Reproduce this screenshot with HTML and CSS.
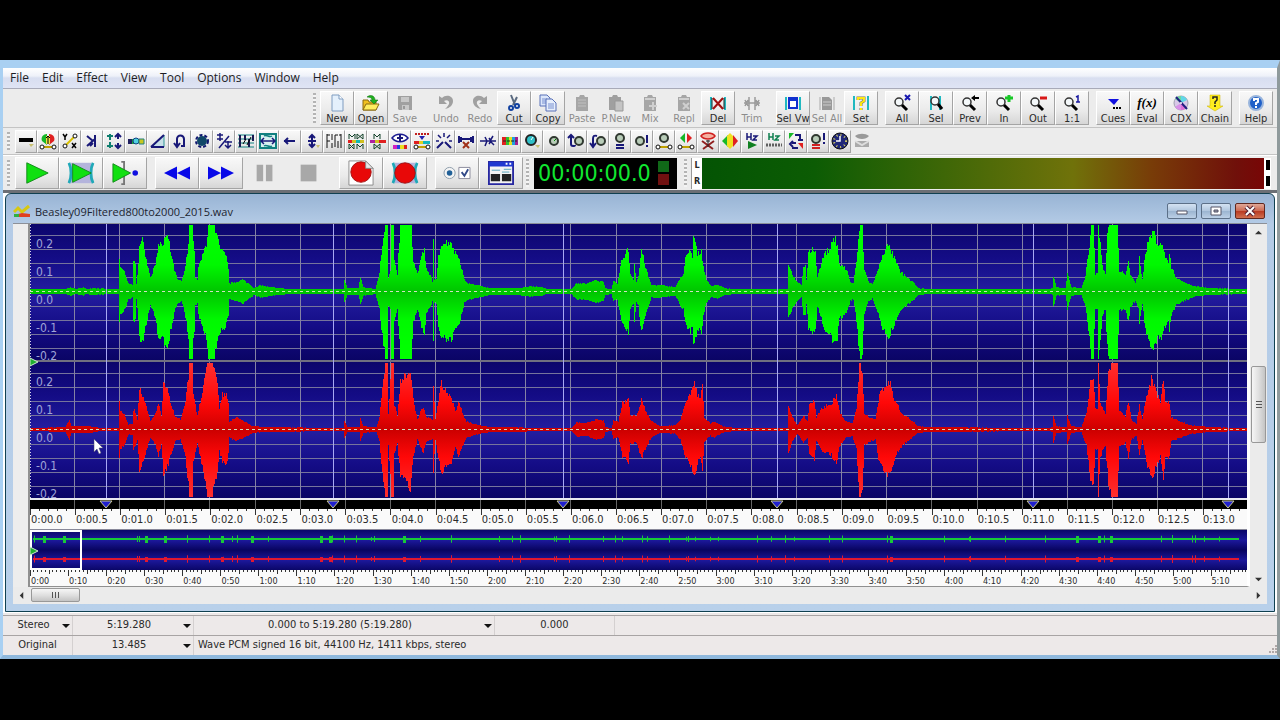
FILE: index.html
```html
<!DOCTYPE html>
<html lang="en">
<head>
    <meta charset="UTF-8">
    <meta name="viewport" content="width=device-width, initial-scale=1.0">
    <title>Beasley09Filtered800to2000_2015.wav</title>
    <link rel="stylesheet" href="styles.css">
</head>
<body>

<div class="app">
    <nav class="menu">
        <a href="#">File</a>
        <a href="#">Edit</a>
        <a href="#">Effect</a>
        <a href="#">View</a>
        <a href="#">Tool</a>
        <a href="#">Options</a>
        <a href="#">Window</a>
        <a href="#">Help</a>
    </nav>

    <!-- main toolbar -->
    <div class="toolbar main-bar">
        <span class="grip"></span>
        <div class="group">
            <button class="tool"><svg viewBox="0 0 18 18"><path d="M4 1h7l4 4v12H4z" fill="#e4f0fc" stroke="#7e9cc0"/><path d="M11 1v4h4" fill="#fff" stroke="#7e9cc0"/></svg>New</button>
            <button class="tool"><svg viewBox="0 0 18 18"><path d="M1 16V6h5l1 2h7v8z" fill="#f0c020" stroke="#8a6a10"/><path d="M1 16l3-6h13l-3 6z" fill="#ffee60" stroke="#8a6a10"/><path d="M5 3c4-3 8-1 8 3h3l-4 4-4-4h2c0-2-2-3-5-3z" fill="#20b020" stroke="#0a6a0a" stroke-width=".5"/></svg>Open</button>
            <button class="tool" disabled><svg viewBox="0 0 18 18"><path d="M2 2h14v14H3l-1-1z" fill="#a0a0a0"/><path d="M5 3h8v5H5zM6 11h7v5H6z" fill="#c8c8c8"/><path d="M7 12h2v3H7z" fill="#999"/></svg>Save</button>
        </div>
        <div class="group">
            <button class="tool" disabled><svg viewBox="0 0 18 18"><path d="M2 2v8h8L7 7c3-2 6 0 5 3-1 2-2 3-4 5 5-1 8-4 8-8 0-5-7-7-11-3z" fill="#a0a0a0"/></svg>Undo</button>
            <button class="tool" disabled><svg viewBox="0 0 18 18"><path d="M16 2v8H8l3-3C8 5 5 7 6 10c1 2 2 3 4 5-5-1-8-4-8-8 0-5 7-7 11-3z" fill="#a0a0a0"/></svg>Redo</button>
            <button class="tool"><svg viewBox="0 0 18 18"><path d="M6 1l4 10M12 3l-4 8" stroke="#5a6a80" stroke-width="2" fill="none"/><circle cx="6" cy="14" r="2" fill="none" stroke="#1040a0" stroke-width="2"/><circle cx="12" cy="12" r="2" fill="none" stroke="#1040a0" stroke-width="2"/></svg>Cut</button>
            <button class="tool"><svg viewBox="0 0 18 18"><path d="M1 1h7l3 3v8H1z" fill="#dbe6fa" stroke="#5870b8"/><path d="M3 5h5M3 7h5M3 9h4" stroke="#7890d0"/><path d="M7 5h6l4 4v8H7z" fill="#e6eefc" stroke="#5870b8"/><path d="M9 10h6M9 12h6M9 14h6" stroke="#7890d0"/></svg>Copy</button>
            <button class="tool" disabled><svg viewBox="0 0 18 18"><path d="M3 3h3l1-2h4l1 2h3v14H3z" fill="#a6a6a6"/><path d="M5 6h8M5 9h8M5 12h8" stroke="#c0c0c0"/></svg>Paste</button>
            <button class="tool" disabled><svg viewBox="0 0 18 18"><path d="M2 3h3l1-2h4l1 2h3v13H2z" fill="#a0a0a0"/><path d="M8 7h8v10H8z" fill="#c4c4c4" stroke="#999"/></svg>P.New</button>
            <button class="tool" disabled><svg viewBox="0 0 18 18"><path d="M3 3h3l1-2h4l1 2h3v14H3z" fill="#a6a6a6"/><path d="M12 8v8M8 12h8M4 5h10" stroke="#d0d0d0" stroke-width="2"/></svg>Mix</button>
            <button class="tool" disabled><svg viewBox="0 0 18 18"><path d="M3 3h3l1-2h4l1 2h3v14H3z" fill="#a6a6a6"/><path d="M8 9l6 6M14 9l-6 6M4 5h10" stroke="#d0d0d0" stroke-width="2"/></svg>Repl</button>
            <button class="tool"><svg viewBox="0 0 18 18"><path d="M2 3v13M16 3v13" stroke="#20b8c0" stroke-width="2"/><path d="M3 4v11M15 4v11" stroke="#222"/><path d="M4 4l10 11M14 4L4 15" stroke="#a01010" stroke-width="2"/></svg>Del</button>
            <button class="tool" disabled><svg viewBox="0 0 18 18"><path d="M1 9h16M6 3v13M12 3v13M2 6l3 6M5 6l-3 6M13 6l3 6M16 6l-3 6" stroke="#9a9a9a" stroke-width="1.500" fill="none"/></svg>Trim</button>
        </div>
        <div class="group">
            <button class="tool"><svg viewBox="0 0 18 18"><path d="M2 3v13M16 3v13" stroke="#20b8c0" stroke-width="2"/><path d="M4 3h10v12H4z" fill="#1030d0"/><path d="M6 7h6v6H6z" fill="#fff"/></svg>Sel Vw</button>
            <button class="tool" disabled><svg viewBox="0 0 18 18"><path d="M2 3v13M16 3v13" stroke="#aaa"/><path d="M4 3h7l3 3v10H4z" fill="#999"/><path d="M5 8h8M5 11h8" stroke="#ccc"/></svg>Sel All</button>
            <button class="tool"><svg viewBox="0 0 18 18"><path d="M2 2v14M16 2v14" stroke="#20b8c0" stroke-width="2"/><path d="M6 6V4h6v3L9 9v3M9 14v2" stroke="#776" stroke-width="3" fill="none"/><path d="M6 6V4h6v3L9 9v3M9 14v2" stroke="#ffe810" stroke-width="2" fill="none"/></svg>Set</button>
        </div>
        <div class="group">
            <button class="tool"><svg viewBox="0 0 18 18"><circle cx="6" cy="8" r="4" class="lens"/><path d="M9 11l5 5" class="handle"/><path d="M12 1l5 5M17 1l-5 5" stroke="#1818b0" stroke-width="2"/></svg>All</button>
            <button class="tool"><svg viewBox="0 0 18 18"><path d="M4 2v14M13 2v14" stroke="#20b8c0" stroke-width="2"/><circle cx="8" cy="7" r="4" class="lens"/><path d="M11 10l4 5" class="handle"/></svg>Sel</button>
            <button class="tool"><svg viewBox="0 0 18 18"><circle cx="6" cy="8" r="4" class="lens"/><path d="M9 11l5 5" class="handle"/><path d="M10 4l4-3v2h4v2h-4v2z" fill="#000"/></svg>Prev</button>
            <button class="tool"><svg viewBox="0 0 18 18"><circle cx="6" cy="8" r="4" class="lens"/><path d="M9 11l5 5" class="handle"/><path d="M14 1v7M10 4h8" stroke="#18c828" stroke-width="3"/></svg>In</button>
            <button class="tool"><svg viewBox="0 0 18 18"><circle cx="6" cy="8" r="4" class="lens"/><path d="M9 11l5 5" class="handle"/><path d="M11 4h7" stroke="#d81818" stroke-width="3"/></svg>Out</button>
            <button class="tool"><svg viewBox="0 0 18 18"><circle cx="6" cy="8" r="4" class="lens"/><path d="M9 11l5 5" class="handle"/><path d="M13 3l2-1v6M13 8h4" stroke="#1818a0" stroke-width="1.500" fill="none"/></svg>1:1</button>
        </div>
        <div class="group">
            <button class="tool"><svg viewBox="0 0 18 18"><path d="M4 5h11l-5 6z" fill="#1010e0"/><path d="M9 13h2v2H9zM12 13h2v2h-2zM15 13h2v2h-2z" fill="#000"/></svg>Cues</button>
            <button class="tool"><span class="fx">f(x)</span>Eval</button>
            <button class="tool"><svg viewBox="0 0 18 18"><circle cx="9" cy="9" r="7" fill="#d8c8e8" stroke="#a0a0b0"/><path d="M9 9L3 5a7 7 0 0 1 6-3z" fill="#70d8a0"/><path d="M9 9V2a7 7 0 0 1 6 4z" fill="#60d8e8"/><path d="M9 9l6 4a7 7 0 0 1-6 3z" fill="#e070d8"/><path d="M9 9l-6 4a7 7 0 0 0 6 3z" fill="#d890e8"/><path d="M4 3l11 12" stroke="#202080" stroke-width="2"/><circle cx="9" cy="9" r="1" fill="#fff"/></svg>CDX</button>
            <button class="tool"><svg viewBox="0 0 18 18"><path d="M4 1h10v11h3l-8 5-8-5h3z" fill="#ffee20" stroke="#c8b000" stroke-width=".5"/><path d="M7 5V3h4v3L9 8v2M9 11v2" stroke="#222" stroke-width="1.500" fill="none"/></svg>Chain</button>
        </div>
        <div class="group">
            <button class="tool"><svg viewBox="0 0 18 18"><circle cx="9" cy="9" r="7" fill="#2060c8" stroke="#98b4dc" stroke-width="2"/><path d="M7 7V5h4v3L9 9v2M9 12v2" stroke="#fff" stroke-width="2" fill="none"/></svg>Help</button>
        </div>
    </div>

    <!-- effects toolbar -->
    <div class="toolbar fx-bar">
        <span class="grip"></span>
        <button class="fxb" aria-label="Silence"><svg viewBox="0 0 18 18"><path d="M2 6h14v4H2z" fill="#000"/><path d="M12 12h5l-3 3z" fill="#c8c070"/></svg></button>
        <button class="fxb" aria-label="Mechanize"><svg viewBox="0 0 18 18"><path d="M8 2a5 5 0 0 0-5 7l5 4z" fill="#18b828"/><path d="M10 2a5 5 0 0 1 5 7l-5 4z" fill="#e02020"/><path d="M7 4h4v8H7z" fill="#f0e040"/><path d="M9 4v8M7 6l2-2 2 2" stroke="#000" fill="none"/><path d="M4 15h10" stroke="#c0a000" stroke-width="2"/><circle cx="3" cy="15" r="2" class="node"/><circle cx="15" cy="15" r="2" class="node"/></svg></button>
        <button class="fxb" aria-label="Expression"><svg viewBox="0 0 18 18"><path d="M2 2l2 3 2-3M4 5v3M11 11l4 5M15 11l-4 5" stroke="#000" stroke-width="1.500" fill="none"/><path d="M4 14L14 4" stroke="#d8c000" stroke-width="2"/><circle cx="4" cy="14" r="2" class="node"/><circle cx="14" cy="4" r="2" class="node"/></svg></button>
        <button class="fxb" aria-label="Doppler"><svg viewBox="0 0 18 18"><path d="M4 4l6 5M4 14l8-7v-3M12 3v12M7 14l3-3" class="nv"/></svg></button>
        <button class="fxb" aria-label="Dynamics"><svg viewBox="0 0 18 18"><path d="M5 2v6M2 4h6M5 10v6M2 14h6" stroke="#108070" stroke-width="2"/><path d="M13 2v5M10 5l3-3 3 3M13 11v5M10 13l3 3 3-3" class="nv"/></svg></button>
        <button class="fxb" aria-label="Echo"><svg viewBox="0 0 18 18"><path d="M1 7h4v5H1z" fill="#202060"/><path d="M5 7h3v5H5z" fill="#18a838"/><circle cx="9" cy="9" r="3" fill="#50d0e0" stroke="#104080"/><path d="M12 7h5v5h-5z" fill="#c8c820" stroke="#208080"/></svg></button>
        <button class="fxb" aria-label="Fade"><svg viewBox="0 0 18 18"><path d="M3 15L15 3v12z" fill="#c8e0e8" stroke="#309898"/><path d="M2 15L15 3M2 15h13" class="nv"/></svg></button>
        <button class="fxb" aria-label="Reverse"><svg viewBox="0 0 18 18"><path d="M6 14V7a3 3 0 0 1 7 0v7h-3M3 11l3 4 3-4" class="nv"/></svg></button>
        <button class="fxb" aria-label="Filter"><svg viewBox="0 0 18 18"><circle cx="9" cy="9" r="5" fill="#104868"/><circle cx="9" cy="9" r="6" fill="none" stroke="#101870" stroke-width="2" stroke-dasharray="3 2"/></svg></button>
        <button class="fxb" aria-label="Flanger"><svg viewBox="0 0 18 18"><path d="M5 1v8M2 3h6M2 7h6M4 16L14 4M13 9v7M10 10h7M10 13l3 3 3-3" class="nv thin"/></svg></button>
        <button class="fxb" aria-label="Equalizer"><svg viewBox="0 0 18 18"><path d="M1 3h16M1 7h16M1 11h16M1 15h16" stroke="#108080"/><path d="M3 3v12M8 3v5M12 7v8M16 3v6" stroke="#181850" stroke-width="2"/><path d="M6 12l3-5M10 13l4-8" stroke="#000"/></svg></button>
        <button class="fxb" aria-label="Pitch"><svg viewBox="0 0 18 18"><path d="M1 2h16v14H1z" fill="#d8f0f0" stroke="#108080" stroke-width="2"/><path d="M3 9h12M5 6L2 9l3 3M13 6l3 3-3 3" class="nv thin"/><path d="M5 4c3-2 5 2 8 0M5 14c3-2 5 2 8 0" stroke="#108080" stroke-width="1.500" fill="none"/></svg></button>
        <button class="fxb" aria-label="Offset"><svg viewBox="0 0 18 18"><path d="M3 9h11M7 6L4 9l3 3" class="nv"/></svg></button>
        <button class="fxb" aria-label="Interpolate"><svg viewBox="0 0 18 18"><path d="M9 3v12M6 6l3-3 3 3M6 12l3 3 3-3M5 9h8" class="nv"/><path d="M13 13h4l-2 3z" fill="#c8c070"/></svg></button>
        <button class="fxb" aria-label="Resample"><svg viewBox="0 0 18 18"><path d="M2 2v14M2 3h3M2 9h3M7 2v6M7 11v5M10 3v12M10 3h3M13 9v7M16 2v14M14 3h2" stroke="#111" fill="none"/></svg></button>
        <button class="fxb" aria-label="Spectrum filter"><svg viewBox="0 0 18 18"><path d="M1 8h16v3H1z" fill="#d0c020"/><path d="M1 8h4v3H1z" fill="#e02020"/><path d="M9 8h4v3H9z" fill="#10b8b0"/><path d="M2 7V2l3 3 3-3v5M10 2v5l6-5v5l-6-5M2 12v5l5-5v5l-5-5M10 17v-5l3 3 3-3v5" stroke="#114028" fill="none"/></svg></button>
        <button class="fxb" aria-label="Parametric"><svg viewBox="0 0 18 18"><path d="M1 8h16v3H1z" fill="#d0c020"/><path d="M1 8h5v3H1z" fill="#b020a0"/><path d="M10 8h7v3h-7z" fill="#e02020"/><path d="M5 7V2l3 3 3-3v5M5 12v5l6-5v5l-6-5" stroke="#114028" fill="none"/></svg></button>
        <button class="fxb" aria-label="Spectrum view"><svg viewBox="0 0 18 18"><path d="M1 6c4-5 12-5 16 0-4 5-12 5-16 0z" fill="#fff" stroke="#181890" stroke-width="1.500"/><path d="M9 3v6M6 6h6" class="nv"/><path d="M2 13h4v4H2z" fill="#d020c0"/><path d="M6 13h3v4H6z" fill="#2040e0"/><path d="M9 13h4v4H9z" fill="#e8e020"/><path d="M13 13h3v4h-3z" fill="#e02020"/></svg></button>
        <button class="fxb" aria-label="Noise shape"><svg viewBox="0 0 18 18"><path d="M2 2h14" stroke="#c02020" stroke-width="2" stroke-dasharray="2 1"/><path d="M6 4h6L9 8z" fill="#2020b0"/><path d="M1 9h5v3H1z" fill="#e02020"/><path d="M6 9h4v3H6z" fill="#e0d020"/><path d="M10 9h7v3h-7z" fill="#10b8c0"/><path d="M4 15h10" stroke="#c0a000" stroke-width="2"/><circle cx="3" cy="15" r="2" class="node"/><circle cx="15" cy="15" r="2" class="node"/></svg></button>
        <button class="fxb" aria-label="Pop click"><svg viewBox="0 0 18 18"><path d="M2 16l6-6M16 16l-6-6" class="nv"/><path d="M9 1v4M3 3l3 3M15 3l-3 3M1 9h3M14 9h3" class="nv thin"/></svg></button>
        <button class="fxb" aria-label="Noise gate"><svg viewBox="0 0 18 18"><path d="M2 4v7M4 5v5M14 5v5M16 4v7M2 7h14" class="nv"/><path d="M6 10l6 6M12 10l-6 6" stroke="#a03018" stroke-width="2"/></svg></button>
        <button class="fxb" aria-label="Smoother"><svg viewBox="0 0 18 18"><path d="M1 9h16M6 5l2 4-2 5M10 6l2 3-2 3M14 4l-3 5 4 4" class="nv thin"/></svg></button>
        <button class="fxb" aria-label="Stereo mix"><svg viewBox="0 0 18 18"><path d="M1 5h4v8H1z" fill="#e02020"/><path d="M5 5h3v8H5z" fill="#30c030"/><path d="M8 5h3v8H8z" fill="#e8e020"/><path d="M11 5h3v8h-3z" fill="#20a0e0"/><path d="M14 5h3v8h-3z" fill="#a02090"/><path d="M2 9h14" stroke="#222" stroke-dasharray="3 1"/></svg></button>
        <button class="fxb" aria-label="Volume"><svg viewBox="0 0 18 18"><circle cx="8" cy="8" r="5" fill="#30c0c8" stroke="#222" stroke-width="2"/><path d="M8 8l2-3" stroke="#fff"/><path d="M12 13h5l-2 3z" fill="#c8c070"/></svg></button>
        <button class="fxb" aria-label="Knob"><svg viewBox="0 0 18 18"><circle cx="9" cy="9" r="4" class="knob"/><path d="M9 9l2-2" stroke="#080"/></svg></button>
        <button class="fxb" aria-label="Fade in"><svg viewBox="0 0 18 18"><path d="M4 4v8c0 3 4 2 4 1M1 6l3-3 3 3" class="nv"/><circle cx="12" cy="9" r="4" class="knob"/></svg></button>
        <button class="fxb" aria-label="Fade out"><svg viewBox="0 0 18 18"><path d="M8 4c-3-1-4 0-4 3v7M1 11l3 4 3-4" class="nv"/><circle cx="12" cy="9" r="4" class="knob"/></svg></button>
        <button class="fxb" aria-label="Match"><svg viewBox="0 0 18 18"><circle cx="9" cy="6" r="4" class="knob"/><path d="M5 13h8M5 16h8" class="nv"/></svg></button>
        <button class="fxb" aria-label="Maximize"><svg viewBox="0 0 18 18"><circle cx="7" cy="9" r="4" class="knob"/><path d="M14 3v8M14 13v2" class="nv"/></svg></button>
        <button class="fxb" aria-label="Shape"><svg viewBox="0 0 18 18"><circle cx="9" cy="6" r="4" class="knob"/><path d="M3 15h12" stroke="#c0a000" stroke-width="2"/><circle cx="3" cy="15" r="2" class="node"/><circle cx="15" cy="15" r="2" class="node"/></svg></button>
        <button class="fxb" aria-label="Pan"><svg viewBox="0 0 18 18"><path d="M8 1v10L3 6z" fill="#18b828"/><path d="M10 1v10l5-5z" fill="#e02020"/><path d="M3 15h12" stroke="#c0a000" stroke-width="2"/><circle cx="3" cy="15" r="2" class="node"/><circle cx="15" cy="15" r="2" class="node"/></svg></button>
        <button class="fxb" aria-label="Reduce vocals"><svg viewBox="0 0 18 18"><path d="M2 4c3-4 11-4 14 0-3 4-11 4-14 0z" fill="#f4b0a0" stroke="#d02020" stroke-width="1.500"/><path d="M3 9l11 8M15 9L4 17" stroke="#902020" stroke-width="2"/><path d="M9 8v7M7 9h4" stroke="#222"/></svg></button>
        <button class="fxb" aria-label="Balance"><svg viewBox="0 0 18 18"><path d="M7 3v12L1 9z" fill="#18b828"/><path d="M9 1l3 3v10l-3 3-3-3V4z" fill="#f0e020"/><path d="M12 3v12l5-6z" fill="#e02020"/></svg></button>
        <button class="fxb" aria-label="Playback rate"><svg viewBox="0 0 18 18"><path d="M4 1v7M4 5h4M8 1v7M10 4h4l-4 4h4" class="nv thin"/><path d="M5 9l9 4-9 4z" fill="#108020"/></svg></button>
        <button class="fxb" aria-label="Sample rate"><svg viewBox="0 0 18 18"><path d="M4 1v7M4 5h4M8 1v7M10 4h4l-4 4h4" stroke="#108050" fill="none" stroke-width="1.500"/><path d="M1 13h16" stroke="#606060" stroke-width="3" stroke-dasharray="2 1"/></svg></button>
        <button class="fxb" aria-label="Swap"><svg viewBox="0 0 18 18"><path d="M2 1h5L2 7z" fill="#18b828"/><path d="M8 3h5v4M16 8h-5M9 11H5M6 9l-3 3 3 3M5 16h6" class="nv"/><path d="M11 11h5v6z" fill="#e02020"/></svg></button>
        <button class="fxb" aria-label="Auto"><svg viewBox="0 0 18 18"><circle cx="7" cy="7" r="4" class="knob"/><path d="M15 1v7M15 10v2" class="nv"/><path d="M3 13h8M3 16h8" stroke="#d02020" stroke-width="2"/></svg></button>
        <button class="fxb" aria-label="Time"><svg viewBox="0 0 18 18"><circle cx="9" cy="9" r="8" fill="#202878" stroke="#111"/><circle cx="9" cy="9" r="6" fill="none" stroke="#e0d860" stroke-width="2" stroke-dasharray="1 3"/><path d="M9 4v5H5" stroke="#fff" stroke-width="1.500" fill="none"/></svg></button>
        <button class="fxb" aria-label="Speech" disabled><svg viewBox="0 0 18 18"><path d="M2 4c4-3 10-3 14 0-3 4-11 4-14 0z" fill="#999"/><path d="M2 9h14v6H2z" fill="#aaa"/><path d="M2 9l7 4 7-4" stroke="#ddd" stroke-width="2" fill="none"/></svg></button>
    </div>

    <!-- transport, clock and level meter -->
    <div class="toolbar transport">
        <span class="grip"></span>
        <div class="group">
            <button class="big" aria-label="Play"><svg viewBox="0 0 30 28"><path d="M4 3l23 11L4 25z" class="play"/></svg></button>
            <button class="big" aria-label="Play selection"><svg viewBox="0 0 30 28"><path d="M4 3h22v22H4z" fill="#b4b4dc"/><path d="M2 3c3 6 3 16 0 22M28 3c-3 6-3 16 0 22" class="bracket"/><path d="M6 4l20 10L6 24z" class="play"/></svg></button>
            <button class="big" aria-label="Play from cursor"><svg viewBox="0 0 30 28"><path d="M11 2h3v24h-3" fill="none" stroke="#777" stroke-width="2"/><path d="M2 4l19 10L2 24z" class="play"/><circle cx="26" cy="14" r="3" fill="#1010e0"/></svg></button>
        </div>
        <div class="group">
            <button class="big" aria-label="Rewind"><svg viewBox="0 0 30 28"><path d="M15 7v14L1 14zM29 7v14l-14-7z" class="seek"/></svg></button>
            <button class="big" aria-label="Fast forward"><svg viewBox="0 0 30 28"><path d="M1 7v14l14-7zM15 7v14l14-7z" class="seek"/></svg></button>
            <button class="big" aria-label="Pause" disabled><svg viewBox="0 0 30 28"><path d="M6 5h7v18H6zM16 5h7v18h-7z" fill="#a8a8a8"/></svg></button>
            <button class="big" aria-label="Stop" disabled><svg viewBox="0 0 30 28"><path d="M6 5h17v18H6z" fill="#a8a8a8"/></svg></button>
        </div>
        <div class="group">
            <button class="big" aria-label="Record new"><svg viewBox="0 0 30 28"><path d="M2 1h18l8 8v18H2z" fill="#fff" stroke="#888"/><circle cx="15" cy="13" r="11" class="rec"/><path d="M20 1v8h8z" fill="#e8e8e8" stroke="#888"/></svg></button>
            <button class="big" aria-label="Record"><svg viewBox="0 0 30 28"><path d="M4 3h22v22H4z" fill="#b4b4dc"/><path d="M2 3c3 6 3 16 0 22M28 3c-3 6-3 16 0 22" class="bracket"/><circle cx="15" cy="14" r="11" class="rec"/></svg></button>
        </div>
        <div class="group">
            <button class="big" aria-label="Control options"><svg viewBox="0 0 30 28"><circle cx="7" cy="14" r="6" fill="#f4f4f4" stroke="#8898a8"/><circle cx="7" cy="14" r="3" fill="#206098"/><path d="M17 8h12v12H17z" fill="#fff" stroke="#889"/><path d="M20 13l3 4 4-7" fill="none" stroke="#304888" stroke-width="2"/></svg></button>
            <button class="big" aria-label="Visuals"><svg viewBox="0 0 30 28"><path d="M2 2h26v24H2z" fill="#f4f4f4" stroke="#2828a0" stroke-width="2"/><path d="M2 2h26v5H2z" fill="#2038d0"/><path d="M20 4h2M24 4h2" stroke="#fff" stroke-width="2"/><path d="M4 15h10v8H4zM16 15h10v8H16z" fill="#222"/><path d="M5 11h9M18 10h8M16 13h8" stroke="#50a0b8"/></svg></button>
        </div>
        <span class="grip clock-grip"></span>
        <div class="clock">
            <output>00:00:00.0</output>
            <div class="leds"><i class="led-green"></i><i class="led-red"></i></div>
        </div>
        <span class="grip meter-grip"></span>
        <div class="meter">
            <div class="channels"><b>L</b><b>R</b></div>
            <div class="level"></div>
            <div class="peaks"><i></i><i></i></div>
        </div>
    </div>

    <!-- sound window -->
    <div class="desk">
        <section class="sound">
            <header class="titlebar">
                <svg class="logo" viewBox="0 0 18 14"><path d="M1 8l4-4 4 4 7-6" fill="none" stroke="#d8c810" stroke-width="3"/><path d="M1 10h4l4-1 8 1v3H1z" fill="#e04020"/><path d="M1 10h5v3H1z" fill="#30b040"/></svg>
                <h1>Beasley09Filtered800to2000_2015.wav</h1>
                <button class="win" aria-label="Minimize"><svg viewBox="0 0 16 12"><path d="M3 6h10v3H3z" fill="#fff" stroke="#556"/></svg></button>
                <button class="win" aria-label="Restore"><svg viewBox="0 0 16 12"><path d="M3 2h10v8H3z" fill="#fff" stroke="#556"/><path d="M6 5h4v2H6z" fill="#99a" stroke="#556"/></svg></button>
                <button class="win close" aria-label="Close"><svg viewBox="0 0 16 12"><path d="M4 2l8 8M12 2l-8 8" stroke="#523" stroke-width="4"/><path d="M4 2l8 8M12 2l-8 8" stroke="#fff" stroke-width="2"/></svg></button>
            </header>

            <div class="client">
                <div class="view">
                    <div class="wave">
                        <svg id="wave" viewBox="0 0 1217 276" preserveAspectRatio="none">
                            <defs>
                                <linearGradient id="greenFill" gradientUnits="userSpaceOnUse" x1="0" y1="0" x2="0" y2="136">
                                    <stop offset="0.1" stop-color="#00ff00"/>
                                    <stop offset="0.3" stop-color="#00f800"/>
                                    <stop offset="0.5" stop-color="#00c400"/>
                                    <stop offset="0.7" stop-color="#00f800"/>
                                    <stop offset="0.9" stop-color="#00ff00"/>
                                </linearGradient>
                                <linearGradient id="redFill" gradientUnits="userSpaceOnUse" x1="0" y1="138" x2="0" y2="274">
                                    <stop offset="0" stop-color="#ff3030"/>
                                    <stop offset="0.3" stop-color="#ff0808"/>
                                    <stop offset="0.5" stop-color="#cc0000"/>
                                    <stop offset="0.7" stop-color="#ff0808"/>
                                    <stop offset="1" stop-color="#ff3030"/>
                                </linearGradient>
                            </defs>
                        </svg>
                        <ul class="scale left">
                            <li>0.2</li><li>0.1</li><li>0.0</li><li>-0.1</li><li>-0.2</li>
                        </ul>
                        <ul class="scale right">
                            <li>0.2</li><li>0.1</li><li>0.0</li><li>-0.1</li><li>-0.2</li>
                        </ul>
                        <svg class="mark wave-mark" viewBox="0 0 9 10"><path d="M0 1l8 4-8 4z" class="flag"/></svg>
                        <svg class="pointer" viewBox="0 0 10 16"><path d="M1 0v13l3-3 2 5 2-1-2-5h4z" fill="#fff" stroke="#446" stroke-width=".5"/></svg>
                    </div>
                    <svg id="cues" class="cues" viewBox="0 0 1217 9" preserveAspectRatio="none"></svg>
                    <div class="ruler" id="ruler"></div>
                    <div class="overview">
                        <svg id="overview" viewBox="0 0 1217 40" preserveAspectRatio="none"></svg>
                        <div class="range"></div>
                        <svg class="mark over-mark" viewBox="0 0 9 10"><path d="M0 1l8 4-8 4z" class="flag"/></svg>
                    </div>
                    <div class="ruler small" id="fullRuler"></div>
                </div>
                <div class="vscroll">
                    <button class="arrow" aria-label="Scroll up"><svg viewBox="0 0 8 8"><path d="M0 6l4-4 4 4z"/></svg></button>
                    <div class="track"><span class="thumb"></span></div>
                    <button class="arrow" aria-label="Scroll down"><svg viewBox="0 0 8 8"><path d="M0 2l4 4 4-4z"/></svg></button>
                </div>
                <div class="hscroll">
                    <button class="arrow" aria-label="Scroll left"><svg viewBox="0 0 8 8"><path d="M6 0L2 4l4 4z"/></svg></button>
                    <div class="track"><span class="thumb"></span></div>
                    <button class="arrow" aria-label="Scroll right"><svg viewBox="0 0 8 8"><path d="M2 0l4 4-4 4z"/></svg></button>
                </div>
            </div>
        </section>
    </div>

    <footer class="status">
        <div class="line">
            <label class="cell mode"><select aria-label="Channels"><option>Stereo</option></select></label>
            <label class="cell length"><select aria-label="Length"><option>5:19.280</option></select></label>
            <label class="cell selection"><select aria-label="Selection"><option>0.000 to 5:19.280 (5:19.280)</option></select></label>
            <span class="cell position">0.000</span>
        </div>
        <div class="line">
            <span class="cell mode">Original</span>
            <label class="cell length"><select aria-label="View length"><option>13.485</option></select></label>
            <span class="cell format">Wave PCM signed 16 bit, 44100 Hz, 1411 kbps, stereo</span>
            <svg class="resize" viewBox="0 0 10 10"><path d="M8 2h2M5 5h2M8 5h2M2 8h2M5 8h2M8 8h2" stroke="#b0a8a8" stroke-width="2"/></svg>
        </div>
    </footer>
</div>

<script src="script.js"></script>
</body>
</html>
```
FILE: styles.css
```css
* {
    box-sizing: border-box;
}

body {
    margin: 0;
    padding: 60px 0;
    background: #000;
    color: #2a2a2a;
    font-family: "DejaVu Sans Condensed", "DejaVu Sans", sans-serif;
    font-size: 11px;
}

button {
    font: inherit;
    color: inherit;
    padding: 0;
    cursor: pointer;
}

svg {
    display: block;
}

.app {
    background: #ececec;
    border: solid #a9d0f2;
    border-width: 8px 3px 4px 3px;
    border-right-color: #8f9a9c;
    border-bottom-color: #8fb8dc;
}

/* menu */

.menu {
    display: flex;
    gap: 13px;
    height: 21px;
    padding: 0 7px;
    line-height: 20px;
    background: linear-gradient(#ffffff, #eef1f9 40%, #d8def0 50%, #dfe4f4);
    border-bottom: 1px solid #a8aab8;
    font-family: "Open Sans", sans-serif;
    font-size: 12px;
}

.menu a {
    color: #1c1c24;
    text-decoration: none;
}

/* toolbars */

.toolbar {
    display: flex;
    align-items: center;
}

.group {
    display: flex;
}

.grip {
    flex: none;
    width: 3px;
    align-self: stretch;
    margin: 4px 4px;
    background: repeating-linear-gradient(#b4b4b4 0 2px, #f4f4f4 2px 4px);
}

.main-bar {
    justify-content: flex-end;
    height: 38px;
    gap: 7px;
    padding-right: 4px;
}

.main-bar .grip {
    margin: 4px -3px 4px 0;
}

.tool,
.fxb,
.big {
    border: 1px solid;
    border-color: #fff #a4a4a4 #a4a4a4 #fff;
    background: linear-gradient(#f8f8f8, #eaeaea 60%, #d6d6d6);
}

.tool:disabled,
.fxb:disabled,
.big:disabled {
    color: #8c8c8c;
    background: none;
    border-color: transparent;
}

.tool {
    display: flex;
    flex-direction: column;
    align-items: center;
    width: 34px;
    height: 34px;
    padding-top: 2px;
    line-height: 13px;
    white-space: nowrap;
}

.tool svg {
    width: 18px;
    height: 18px;
    flex: none;
}

.fx {
    height: 18px;
    font: italic bold 13px/18px "Liberation Serif", serif;
    color: #000;
}

.lens {
    fill: #f4f8fa;
    stroke: #333;
    stroke-width: 1.5px;
}

.handle {
    stroke: #000;
    stroke-width: 3px;
}

.fx-bar {
    height: 28px;
    border-top: 1px solid #c4c4c4;
    border-bottom: 1px solid #c4c4c4;
}

.fx-bar .grip,
.transport .grip {
    margin-left: 4px;
    margin-right: 5px;
}

.fxb {
    display: flex;
    justify-content: center;
    align-items: center;
    width: 22px;
    height: 23px;
}

.fxb svg {
    width: 18px;
    height: 18px;
    flex: none;
}

.nv {
    fill: none;
    stroke: #181878;
    stroke-width: 2px;
}

.thin {
    stroke-width: 1.5px;
}

.node {
    fill: #fff;
    stroke: #111;
}

.knob {
    fill: #b8ccb8;
    stroke: #303830;
    stroke-width: 2px;
}

.transport {
    height: 35px;
    border-top: 1px solid #fff;
}

.transport .group {
    margin-right: 8px;
}

.big {
    display: flex;
    justify-content: center;
    align-items: center;
    width: 44px;
    height: 32px;
}

.big svg {
    width: 28px;
    height: 26px;
}

.play {
    fill: #10e010;
    stroke: #108818;
}

.seek {
    fill: #0808e8;
}

.rec {
    fill: #e80808;
    stroke: #a01010;
}

.bracket {
    fill: none;
    stroke: #20a8b8;
    stroke-width: 3px;
}

.transport .clock-grip {
    margin: 3px 5px 3px -5px;
}

.clock {
    display: flex;
    align-items: center;
    justify-content: space-between;
    width: 143px;
    height: 31px;
    padding: 0 8px 0 4px;
    background: #000;
    color: #10e830;
    font-size: 23px;
}

.leds i {
    display: block;
    width: 11px;
    height: 11px;
    margin: 2px 0;
}

.led-green {
    background: #106818;
}

.led-red {
    background: #701010;
}

.transport .meter-grip {
    margin: 3px 4px 3px 7px;
}

.meter {
    flex: 1;
    display: flex;
    height: 31px;
    background: #fff;
    margin-right: 6px;
}

.channels {
    display: flex;
    flex-direction: column;
    justify-content: space-around;
    width: 11px;
    text-align: center;
    border-left: 1px solid #999;
    font-size: 9px;
}

.level {
    flex: 1;
    background: linear-gradient(90deg, #045404, #0c5c04 20%, #70720a 66%, #783c08 80%, #70100a 95%, #780606);
}

.peaks {
    display: flex;
    flex-direction: column;
    justify-content: space-around;
    padding: 0 1px 0 2px;
}

.peaks i {
    width: 4px;
    height: 10px;
    background: #000;
}

/* sound window */

.desk {
    padding: 0 2px;
    background: #fff;
    border-top: 3px solid #6b6f75;
    border-bottom: 1px solid #fff;
}

.sound {
    padding: 0 7px 7px;
    border: 1px solid #104050;
    border-radius: 6px 6px 0 0;
    background: linear-gradient(#98b4d4, #b4cbe6 30px, #b8d0ea);
}

.titlebar {
    display: flex;
    align-items: center;
    height: 29px;
    padding: 5px 2px 0 0;
    gap: 4px;
}

.titlebar h1 {
    flex: 1;
    margin: 0;
    font: 11px "Open Sans", sans-serif;
    color: #1c2430;
}

.logo {
    width: 18px;
    height: 14px;
}

.win {
    display: flex;
    justify-content: center;
    align-items: center;
    width: 30px;
    height: 16px;
    border: 1px solid #5c7088;
    border-radius: 2px;
    background: linear-gradient(#d4e2f2, #b0c6de 50%, #9ab4d0 50%, #bcd0e6);
}

.win svg {
    width: 16px;
    height: 12px;
}

.close {
    border-color: #602820;
    background: linear-gradient(#e0a898, #cc6850 50%, #b83820 50%, #d07050);
}

.client {
    display: grid;
    grid-template-columns: 1fr 17px;
    background: #ededed;
    border-top: 1px solid #8c9098;
}

.view {
    min-width: 0;
    margin-left: 15px;
    border: solid #909090;
    border-width: 0 3px 1px 2px;
    border-right-color: #fff;
    background: #fff;
}

.wave {
    position: relative;
    background: #0c0872;
}

.wave > svg:first-child {
    width: 100%;
    height: 276px;
}

.scale {
    position: absolute;
    left: 6px;
    margin: 0;
    padding: 0;
    list-style: none;
    color: #a0a4d8;
    font-size: 12px;
    line-height: 28px;
}

.scale.left {
    top: 6px;
}

.scale.right {
    top: 144px;
    height: 132px;
    overflow: hidden;
}

.mark {
    position: absolute;
    left: 0;
    width: 9px;
    height: 10px;
}

.wave-mark {
    top: 133px;
}

.over-mark {
    top: 16px;
}

.flag {
    fill: #20b030;
    stroke: #d0e8d0;
}

.pointer {
    position: absolute;
    left: 63px;
    top: 215px;
    width: 10px;
    height: 16px;
}

.cues {
    width: 100%;
    height: 9px;
    background: #000;
}

.ruler {
    height: 20px;
    overflow: hidden;
    background: #fafafa;
}

.ruler svg {
    width: 100%;
    height: 6px;
}

.labels {
    display: flex;
    padding-left: 1px;
    line-height: 10px;
    white-space: nowrap;
}

.labels span {
    flex: none;
}

.overview {
    position: relative;
    border-top: 1px solid #889;
}

.overview > svg:first-child {
    width: 100%;
    height: 40px;
    background: linear-gradient(#0a0668, #1c189a 26%, #080460 50%, #1c189a 76%, #0a0668);
}

.range {
    position: absolute;
    left: 0;
    top: 0;
    width: 52px;
    height: 40px;
    border: 2px solid #fff;
}

.ruler.small {
    height: 16px;
    font-size: 9px;
}

.vscroll,
.hscroll {
    display: flex;
    background: #ebebeb;
}

.vscroll {
    flex-direction: column;
}

.hscroll {
    grid-column: 1 / 3;
    height: 17px;
}

.arrow {
    display: flex;
    justify-content: center;
    align-items: center;
    flex: none;
    width: 17px;
    height: 16px;
    border: 0;
    background: none;
}

.arrow svg {
    width: 7px;
    height: 7px;
    fill: #333;
}

.track {
    flex: 1;
}

.thumb {
    display: flex;
    justify-content: center;
    align-items: center;
    border: 1px solid #989898;
    border-radius: 2px;
}

.thumb::after {
    content: "";
}

.vscroll .track {
    padding-top: 126px;
}

.vscroll .thumb {
    width: 15px;
    height: 77px;
    margin: 0 1px;
    background: linear-gradient(90deg, #f6f6f6, #e0e0e0 50%, #c4c4c4);
}

.vscroll .thumb::after {
    background: repeating-linear-gradient(#555 0 1px, transparent 1px 3px);
    width: 6px;
    height: 7px;
}

.hscroll .track {
    padding-left: 1px;
}

.hscroll .thumb {
    width: 49px;
    height: 14px;
    margin: 1px 0;
    background: linear-gradient(#f6f6f6, #e0e0e0 50%, #c4c4c4);
}

.hscroll .thumb::after {
    background: repeating-linear-gradient(90deg, #555 0 1px, transparent 1px 3px);
    width: 8px;
    height: 6px;
}

/* status bar */

.status {
    padding-top: 2px;
    background: #ede9e9;
}

.line {
    display: flex;
    height: 20px;
    border-top: 1px solid #a8a4a4;
    line-height: 18px;
}

.cell {
    position: relative;
    flex: none;
    text-align: center;
    border-right: 1px solid #d4d0d0;
}

.cell select {
    display: block;
    width: 100%;
    height: 18px;
    padding: 0 8px 0 0;
    appearance: none;
    border: 0;
    background: none;
    color: inherit;
    font: inherit;
    text-align: center;
    text-align-last: center;
}

label.cell::after {
    content: "";
    position: absolute;
    right: 2px;
    top: 8px;
    border: 4px solid transparent;
    border-top-color: #111;
    border-bottom: 0;
}

.mode {
    width: 70px;
}

.length {
    width: 121px;
}

.selection {
    width: 301px;
}

.position {
    width: 120px;
}

.format {
    padding-left: 4px;
    border-right: 0;
}

.resize {
    width: 10px;
    height: 10px;
    margin: 8px 0 0 auto;
}
```
FILE: script.js
```js
const NS = "http://www.w3.org/2000/svg";
const WIDTH = 1217;
const SECONDS = 13.485;
const TOTAL = 319.28;

// envelope of each channel: x, height pairs
const left = [
    0,2, 35,2, 40,4, 46,2, 53,4, 56,2, 62,3, 88,2, 89,34, 90,25, 94,20, 98,8, 102,6, 103,30, 105,30, 106,8,
    108,28, 109,50, 111,54, 113,50, 116,32, 120,15, 122,18, 125,30, 128,47, 133,48, 134,55, 138,55, 140,42,
    144,22, 147,12, 151,10, 154,20, 157,40, 159,67, 162,67, 164,40, 165,14, 167,12, 168,25, 172,36, 176,50,
    178,67, 184,67, 187,55, 190,42, 193,40, 196,34, 198,24, 199,8, 208,10, 212,12, 218,8, 224,3, 230,6, 240,4,
    260,2, 313,2, 314,11, 317,3, 328,3, 330,14, 333,4, 345,2, 347,10, 349,18, 351,40, 354,62, 355,67, 357,67,
    358,15, 360,20, 361,67, 363,67, 364,30, 367,17, 368,40, 370,67, 381,67, 383,32, 387,18, 391,36, 394,43,
    396,22, 401,14, 402,10, 403,52, 404,12, 406,12, 408,35, 411,50, 415,50, 421,52, 423,42, 428,37, 431,25,
    434,12, 438,8, 448,6, 460,3, 486,3, 500,5, 512,4, 516,2, 541,2, 546,8, 556,8, 565,11, 573,10, 575,3,
    581,2, 583,10, 587,8, 591,30, 595,40, 598,43, 600,18, 603,12, 604,30, 606,10, 608,15, 611,44, 614,30,
    618,15, 621,6, 630,6, 645,4, 650,14, 653,18, 655,34, 660,42, 662,35, 663,57, 665,50, 667,38, 671,42,
    673,26, 676,12, 681,5, 687,7, 694,3, 710,2, 757,2, 758,28, 761,20, 766,10, 771,6, 773,26, 775,26, 776,12,
    778,38, 782,45, 785,40, 787,16, 791,28, 794,40, 799,42, 804,55, 807,50, 809,28, 814,25, 817,20, 820,9,
    823,8, 826,30, 829,64, 830,67, 832,64, 834,22, 838,10, 842,7, 847,20, 852,38, 858,48, 864,34, 870,20,
    877,14, 884,8, 888,3, 900,2, 1019,2, 1022,3, 1023,16, 1026,4, 1035,3, 1037,18, 1041,4, 1051,3, 1055,15,
    1058,40, 1061,66, 1063,66, 1065,18, 1067,18, 1068,67, 1070,50, 1072,25, 1075,18, 1077,60, 1079,67,
    1087,67, 1089,20, 1095,18, 1098,32, 1100,16, 1105,9, 1108,18, 1109,35, 1112,12, 1115,40, 1119,55,
    1123,62, 1127,50, 1131,50, 1134,38, 1138,30, 1139,42, 1141,24, 1146,14, 1154,9, 1164,5, 1180,3, 1217,2
];

const right = [
    0,1, 35,2, 39,10, 41,3, 60,3, 70,1, 88,1, 89,28, 90,20, 94,16, 98,5, 102,5, 103,20, 105,18, 107,10,
    109,44, 112,36, 116,22, 120,8, 125,16, 128,28, 131,14, 133,46, 136,44, 140,28, 145,12, 150,10, 154,22,
    158,55, 159,67, 162,67, 163,35, 167,14, 172,40, 177,67, 182,67, 187,48, 189,20, 192,36, 196,36, 198,26,
    199,8, 206,12, 214,8, 222,3, 240,2, 313,1, 314,9, 317,2, 329,2, 330,11, 333,3, 346,2, 349,12, 352,45,
    355,67, 357,67, 358,15, 361,67, 363,67, 364,25, 367,14, 370,50, 376,57, 380,62, 383,30, 387,10, 390,18,
    393,23, 396,12, 402,10, 403,44, 405,10, 408,30, 411,48, 415,40, 421,34, 425,18, 428,28, 432,18, 436,8,
    445,5, 460,2, 541,1, 546,7, 556,6, 565,10, 573,9, 575,2, 581,1, 583,9, 588,8, 592,28, 595,28, 598,34,
    600,14, 606,14, 611,30, 615,20, 621,8, 630,3, 645,4, 650,10, 654,26, 660,36, 664,48, 667,36, 670,30,
    672,46, 674,12, 680,6, 684,8, 692,3, 705,1, 757,1, 758,24, 762,12, 767,4, 773,14, 777,8, 779,26, 784,31,
    786,12, 792,22, 796,24, 801,26, 806,36, 809,18, 815,8, 822,6, 826,20, 829,67, 832,60, 834,16, 840,12,
    845,10, 849,36, 855,46, 860,47, 865,28, 872,16, 880,10, 888,3, 900,2, 1019,1, 1022,2, 1023,14, 1026,3,
    1036,2, 1037,14, 1041,3, 1051,2, 1056,16, 1060,50, 1063,56, 1065,20, 1067,20, 1068,67, 1070,28, 1075,16,
    1078,58, 1081,67, 1087,67, 1089,18, 1095,14, 1098,28, 1101,10, 1106,6, 1109,26, 1112,10, 1116,34,
    1121,52, 1126,38, 1130,28, 1133,51, 1135,30, 1139,28, 1141,12, 1150,8, 1160,4, 1180,2, 1217,1
];

const cuePoints = [76, 303, 533, 747, 1003, 1198];

let seed = 7;
function random() {
    seed = (seed * 16807) % 2147483647;
    return seed / 2147483647;
}

function add(parent, name, attrs) {
    const el = document.createElementNS(NS, name);
    for (const key in attrs) el.setAttribute(key, attrs[key]);
    parent.appendChild(el);
    return el;
}

function heightAt(points, x) {
    for (let i = 2; i < points.length; i += 2) {
        if (x <= points[i]) {
            const t = (x - points[i - 2]) / (points[i] - points[i - 2]);
            return points[i - 1] + t * (points[i + 1] - points[i - 1]);
        }
    }
    return 1;
}

function envelope(points, middle) {
    let d = "";
    for (let x = 0; x < WIDTH; x++) {
        const h = heightAt(points, x);
        const up = h > 64 ? 67 : h * (0.88 + random() * 0.16) + 0.5;
        const down = h > 64 ? 67 : h * (0.86 + random() * 0.16) + 0.5;
        d += `M${x} ${(middle - up).toFixed(1)}h1V${(middle + down).toFixed(1)}h-1z`;
    }
    return d;
}

function drawWave() {
    const svg = document.getElementById("wave");
    const defs = svg.querySelector("defs");
    const back = add(defs, "linearGradient", { id: "back", x1: 0, y1: 0, x2: 0, y2: 1 });
    [["0", "#0c066c"], ["0.25", "#140c86"], ["0.5", "#241ea0"], ["0.75", "#140c86"], ["1", "#0a0464"]]
        .forEach(([offset, color]) => add(back, "stop", { offset, "stop-color": color }));

    for (const top of [0, 138]) {
        add(svg, "rect", { x: 0, y: top, width: WIDTH, height: 137, fill: "url(#back)" });
        for (const y of [11, 25, 39, 53, 82, 96, 110, 124]) {
            add(svg, "path", { d: `M0 ${top + y + 0.5}H${WIDTH}`, stroke: "#76749c" });
        }
    }
    for (let s = 0.5; s < SECONDS; s += 0.5) {
        const x = Math.round(s / SECONDS * WIDTH) - 0.5;
        add(svg, "path", { d: `M${x} 0V276`, stroke: "#8482a4" });
    }
    add(svg, "path", { d: envelope(left, 67.5), fill: "url(#greenFill)", "shape-rendering": "crispEdges" });
    add(svg, "path", { d: envelope(right, 205.5), fill: "url(#redFill)", "shape-rendering": "crispEdges" });
    add(svg, "path", { d: "M0 67.5H1217M0 205.5H1217", stroke: "#d0e0c0", "stroke-dasharray": "3 3" });
    add(svg, "path", { d: "M0 137H1217", stroke: "#707080", "stroke-width": 2 });
    add(svg, "path", { d: "M0.5 0V276", stroke: "#d0d0e8", "stroke-dasharray": "1 2" });
    for (const x of cuePoints) {
        add(svg, "path", { d: `M${x + 0.5} 0V276`, stroke: "#a8a8f4" });
    }
    add(svg, "path", { d: "M0 275H1217", stroke: "#e8e8f0", "stroke-width": 2 });

    const cues = document.getElementById("cues");
    for (let s = 0.5; s < SECONDS; s += 0.5) {
        const x = Math.round(s / SECONDS * WIDTH) - 0.5;
        add(cues, "path", { d: `M${x} 0V9`, stroke: "#666" });
    }
    for (const x of cuePoints) {
        add(cues, "path", { d: `M${x - 6} 1h12l-6 7z`, fill: "#2020d0", stroke: "#c8c890" });
    }
}

function drawOverview() {
    const svg = document.getElementById("overview");
    let green = "";
    let red = "";
    for (let x = 3; x < WIDTH - 8; x++) {
        const burst = random() > 0.95 ? 2 + random() * 2 : 1;
        green += `M${x} ${9 - burst}h1v${2 * burst}h-1z`;
        red += `M${x} ${29 - burst}h1v${2 * burst}h-1z`;
    }
    for (const x of [13, 33, 115, 134, 191, 221, 290, 299, 373, 860, 1046, 1068, 1080]) {
        green += `M${x} 6h3v7h-3z`;
        red += `M${x} 27h3v5h-3z`;
    }
    add(svg, "path", { d: green, fill: "#18c838" });
    add(svg, "path", { d: red, fill: "#e01830" });
}

function drawRuler(id, step, total, minor, format) {
    const ruler = document.getElementById(id);
    const svg = add(ruler, "svg", { viewBox: "0 0 1217 6", preserveAspectRatio: "none" });
    const labels = document.createElement("div");
    labels.className = "labels";
    const width = step / total;
    for (let i = 0; i * width < 1; i++) {
        for (let m = 0; m < minor; m++) {
            const x = Math.floor((i + m / minor) * width * WIDTH) + 0.5;
            const size = m === 0 ? 6 : (m * 2 === minor ? 4 : 2);
            add(svg, "path", { d: `M${x} 0v${size}`, stroke: "#333" });
        }
        const label = document.createElement("span");
        label.textContent = format(i * step);
        label.style.width = width * 100 + "%";
        labels.appendChild(label);
    }
    ruler.appendChild(labels);
}

drawWave();
drawOverview();
drawRuler("ruler", 0.5, SECONDS, 5, s => "0:" + s.toFixed(1).padStart(4, "0"));
drawRuler("fullRuler", 10, TOTAL, 10, s => Math.floor(s / 60) + ":" + String(s % 60).padStart(2, "0"));
```
